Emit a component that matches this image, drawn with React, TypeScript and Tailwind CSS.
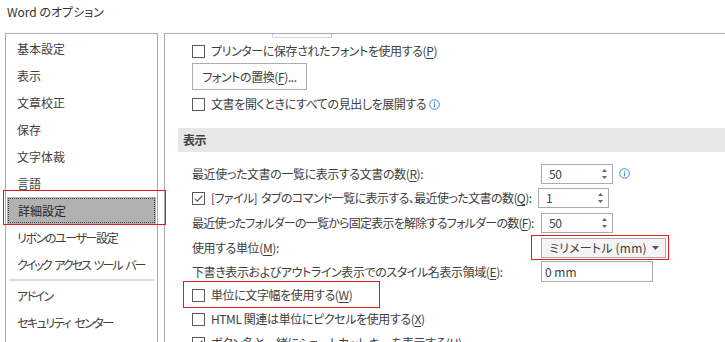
import type { ReactNode } from "react";

const navItems = [
  { label: "基本設定", cls: "" },
  { label: "表示", cls: "" },
  { label: "文章校正", cls: "" },
  { label: "保存", cls: "" },
  { label: "文字体裁", cls: "" },
  { label: "言語", cls: "" },
  { label: "詳細設定", cls: "" },
  { label: "リボンのユーザー設定", cls: "tracking-[-1.4px]" },
  { label: "クイック アクセス ツール バー", cls: "tracking-[-2px] [word-spacing:3px]" },
  { label: "---", cls: "" },
  { label: "アドイン", cls: "tracking-[-1.6px]" },
  { label: "セキュリティ センター", cls: "tracking-[-1.5px] [word-spacing:3px]" },
];

const CheckBox = ({ checked }: { checked?: boolean }) => (
  <span className="w-[13px] h-[13px] border border-[#5a5a5a] bg-white flex items-center justify-center shrink-0">
    {checked && (
      <svg width="11" height="11" viewBox="0 0 11 11">
        <polyline points="1.8,5.6 4.3,8.1 9.3,2.6" fill="none" stroke="#555" strokeWidth="1.2" />
      </svg>
    )}
  </span>
);

const InfoIcon = () => (
  <svg width="11" height="11" viewBox="0 0 11 11" className="shrink-0">
    <circle cx="5.5" cy="5.5" r="4.8" fill="none" stroke="#3c8ad8" strokeWidth="1" />
    <rect x="5" y="2.6" width="1" height="1" fill="#3c8ad8" />
    <rect x="5" y="4.4" width="1" height="4" fill="#3c8ad8" />
  </svg>
);

const SpinBox = ({ value, wide }: { value: string; wide?: boolean }) => (
  <div
    className={`${wide ? "w-[72px]" : "w-[71px]"} h-[20px] border border-[#ababab] bg-white flex items-center pl-[7px] pr-[5px] shrink-0`}
  >
    <span className="flex-1">{value}</span>
    <span className="flex flex-col gap-[4px]">
      <svg width="5" height="3" viewBox="0 0 5 3">
        <path d="M0 3 L2.5 0 L5 3 Z" fill="#666" />
      </svg>
      <svg width="5" height="3" viewBox="0 0 5 3">
        <path d="M0 0 L2.5 3 L5 0 Z" fill="#666" />
      </svg>
    </span>
  </div>
);

const Key = ({ k }: { k: string }) => (
  <>
    (<u className="underline-offset-2">{k}</u>)
  </>
);

const CheckRow = ({ checked, children, h }: { checked?: boolean; children: ReactNode; h: string }) => (
  <div className={`flex items-center gap-[6px] whitespace-nowrap ${h}`}>
    <CheckBox checked={checked} />
    <span>{children}</span>
  </div>
);

export default function App() {
  return (
    <div className="relative w-[725px] h-[342px] overflow-hidden bg-white text-[12px] text-[#404040] font-['Noto_Sans_CJK_JP',sans-serif] [font-feature-settings:'palt']">
      <div className="h-[33px] pl-[7px] pt-[4px] leading-[16px] text-[#333]">Word のオプション</div>

      <div className="flex h-[320px]">
        {/* left navigation */}
        <div className="ml-[5px] w-[153px] border border-[#ababab] pt-[1px]">
          {navItems.map((item, i) =>
            item.label === "---" ? (
              <div key={i} className="h-[4px] flex items-center px-[3px]">
                <div className="h-[2px] w-full bg-[#dcdcdc]" />
              </div>
            ) : i === 6 ? (
              <div key={i} className="h-[27px] mx-[1px] bg-[#b1b1b1] p-[1px]">
                <div className="h-full border border-dotted border-[#444] flex items-center pl-[9px] text-[#262626]">
                  {item.label}
                </div>
              </div>
            ) : (
              <div key={i} className={`h-[27px] flex items-center pl-[11px] whitespace-nowrap ${item.cls}`}>
                {item.label}
              </div>
            )
          )}
        </div>

        {/* content */}
        <div className="ml-[6px] flex-1 border-l border-t border-[#ababab] pl-[27px] tracking-[-0.4px]">
          <div className="ml-[80px] w-[60px] h-[4px] border border-t-0 border-[#d6d6d6] bg-[#fdfdfd]" />
          <CheckRow h="h-[24px] mt-[1px]">
            プリンターに保存されたフォントを使用する<Key k="P" />
          </CheckRow>
          <div className="w-[115px] h-[27px] border border-[#adadad] bg-[#fdfdfd] flex items-center justify-center">
            フォントの置換<Key k="F" />...
          </div>
          <div className="flex items-center gap-[6px] h-[24px] mt-[2px] whitespace-nowrap">
            <CheckBox />
            <span>文書を開くときにすべての見出しを展開する</span>
            <span className="-ml-[3px]">
              <InfoIcon />
            </span>
          </div>

          <div className="-ml-[14px] mt-[12px] h-[24px] bg-[#e7e7e7] flex items-center pl-[5px] font-bold">表示</div>

          <div className="mt-[9px] h-[25px] flex items-center whitespace-nowrap">
            <span className="w-[349px] shrink-0">
              最近使った文書の一覧に表示する文書の数<Key k="R" />:
            </span>
            <SpinBox value="50" wide />
            <span className="ml-[6px]">
              <InfoIcon />
            </span>
          </div>
          <div className="h-[24px] flex items-center gap-[6px] whitespace-nowrap">
            <CheckBox checked />
            <span className="w-[327px] shrink-0 tracking-[-0.6px] [word-spacing:2px]">
              [ファイル] タブのコマンド一覧に表示する、最近使った文書の数<Key k="Q" />:
            </span>
            <div className="-ml-[6px]">
              <SpinBox value="1" />
            </div>
          </div>
          <div className="h-[25px] flex items-center whitespace-nowrap">
            <span className="w-[349px] shrink-0 tracking-[-0.75px]">
              最近使ったフォルダーの一覧から固定表示を解除するフォルダーの数<Key k="F" />:
            </span>
            <SpinBox value="50" wide />
          </div>
          <div className="h-[25px] flex items-center whitespace-nowrap">
            <span className="w-[349px] shrink-0">
              使用する単位<Key k="M" />:
            </span>
            <div className="w-[125px] h-[20px] border border-[#acacac] bg-[#f4f4f4] flex items-center pl-[7px] pr-[6px]">
              <span className="flex-1 tracking-[0.2px]">ミリメートル (mm)</span>
              <svg width="7" height="4" viewBox="0 0 7 4" className="shrink-0">
                <path d="M0 0 L3.5 4 L7 0 Z" fill="#555" />
              </svg>
            </div>
          </div>
          <div className="h-[23px] flex items-center whitespace-nowrap">
            <span className="w-[349px] shrink-0">
              下書き表示およびアウトライン表示でのスタイル名表示領域<Key k="E" />:
            </span>
            <div className="w-[112px] h-[21px] border border-[#ababab] bg-white flex items-center pl-[3px] tracking-normal">
              0 mm
            </div>
          </div>
          <CheckRow h="h-[24px]">
            単位に文字幅を使用する<Key k="W" />
          </CheckRow>
          <CheckRow h="h-[24px]">
            HTML 関連は単位にピクセルを使用する<Key k="X" />
          </CheckRow>
          <CheckRow checked h="h-[24px]">
            ボタン名と一緒にショートカット キーを表示する<Key k="H" />
          </CheckRow>
        </div>
      </div>

      {/* red annotation frames */}
      <div className="absolute left-[3px] top-[190px] w-[163px] h-[35px] border border-[#e3191f]" />
      <div className="absolute left-[531px] top-[235px] w-[138px] h-[25px] border border-[#e3191f]" />
      <div className="absolute left-[183px] top-[281px] w-[197px] h-[27px] border border-[#e3191f]" />
    </div>
  );
}
